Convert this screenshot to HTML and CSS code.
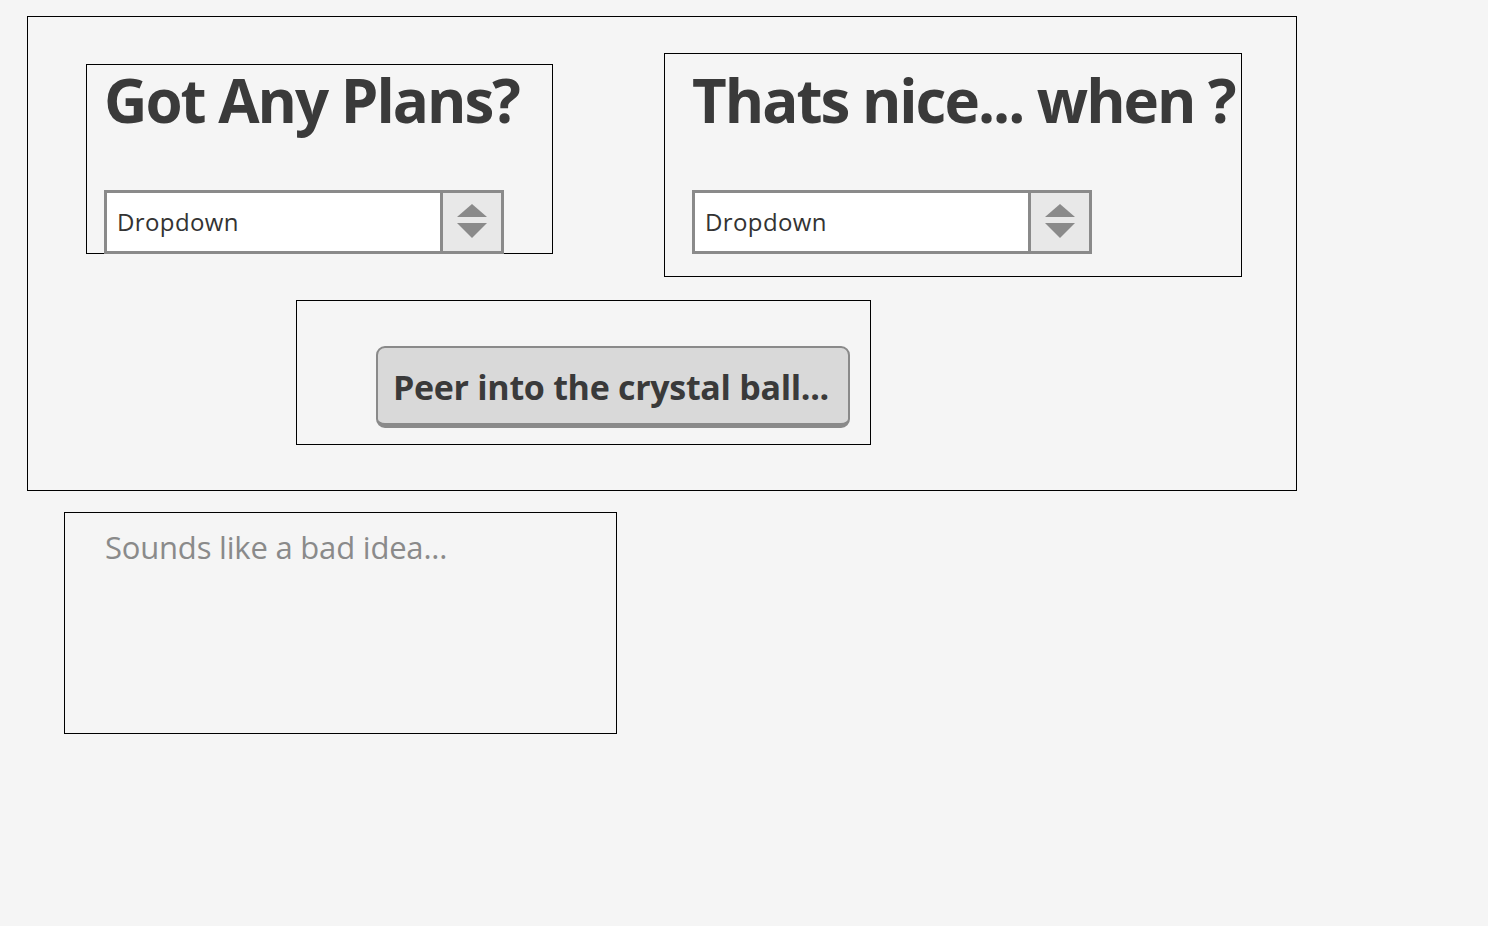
FILE: index.html
```html
<!DOCTYPE html>
<html>
<head>
<meta charset="utf-8">
<link rel="stylesheet" href="styles.css">
</head>
<body>
<div class="outer">
  <div class="row">
    <div class="box box-plans">
      <h1 class="title">Got Any Plans?</h1>
      <div class="dropdown">
        <div class="dd-field">Dropdown</div>
        <div class="dd-btn"><svg width="32" height="40" viewBox="0 0 32 40"><polygon points="16,2 31,15 1,15" fill="#8a8a8a"/><polygon points="1,21 31,21 16,36" fill="#8a8a8a"/></svg></div>
      </div>
    </div>
    <div class="box box-when">
      <h1 class="title">Thats nice... when ?</h1>
      <div class="dropdown">
        <div class="dd-field">Dropdown</div>
        <div class="dd-btn"><svg width="32" height="40" viewBox="0 0 32 40"><polygon points="16,2 31,15 1,15" fill="#8a8a8a"/><polygon points="1,21 31,21 16,36" fill="#8a8a8a"/></svg></div>
      </div>
    </div>
  </div>
  <div class="box box-action">
    <button class="ball-btn">Peer into the crystal ball...</button>
  </div>
</div>
<div class="box box-result">
  <p class="result-text">Sounds like a bad idea...</p>
</div>
</body>
</html>
```

FILE: styles.css
```css
* { box-sizing: border-box; }
html, body { margin: 0; padding: 0; }
body {
  background: #f5f5f5;
  font-family: "Open Sans", "Noto Sans", sans-serif;
  color: #3a3a3a;
  padding: 16px 0 0 27px;
}
.outer {
  width: 1270px;
  height: 475px;
  border: 1px solid #000;
}
.row {
  display: flex;
  align-items: flex-start;
}
.box {
  border: 1px solid #000;
}
.box-plans {
  width: 467px;
  height: 190px;
  margin: 47px 0 0 58px;
  padding: 0 0 0 17px;
}
.box-when {
  width: 578px;
  height: 224px;
  margin: 36px 0 0 111px;
  padding: 0 0 0 27px;
}
.title {
  margin: 0;
  font-size: 60px;
  font-weight: 700;
  line-height: 1;
  letter-spacing: -2px;
  white-space: nowrap;
}
.box-plans .title { padding-top: 5px; height: 125px; }
.box-when .title { padding-top: 16px; height: 136px; }
.dropdown {
  display: flex;
  width: 400px;
  height: 64px;
  border: 3px solid #8a8a8a;
  background: #8a8a8a;
  gap: 3px;
}
.dd-field {
  flex: 1;
  background: #fff;
  font-size: 24px;
  font-weight: 500;
  letter-spacing: 0.4px;
  display: flex;
  align-items: center;
  padding: 0 0 2px 10px;
  color: #333;
}
.dd-btn {
  width: 58px;
  background: #e8e8e8;
  display: flex;
  align-items: center;
  justify-content: center;
}
.box-action {
  width: 575px;
  height: 145px;
  margin: 23px 0 0 268px;
  padding: 45px 0 0 79px;
}
.ball-btn {
  width: 474px;
  height: 82px;
  background: #d9d9d9;
  border: 2px solid #8a8a8a;
  border-bottom-width: 5px;
  border-radius: 9px;
  font-family: "Open Sans", "Noto Sans", sans-serif;
  font-weight: 700;
  font-size: 34px;
  letter-spacing: -0.3px;
  color: #3a3a3a;
  padding: 2px 4px 0 0;
}
.box-result {
  width: 553px;
  height: 222px;
  margin: 21px 0 0 37px;
  padding: 13px 0 0 40px;
}
.result-text {
  margin: 0;
  font-size: 31px;
  font-weight: 500;
  color: #8a8a8a;
  letter-spacing: -0.2px;
}
```
